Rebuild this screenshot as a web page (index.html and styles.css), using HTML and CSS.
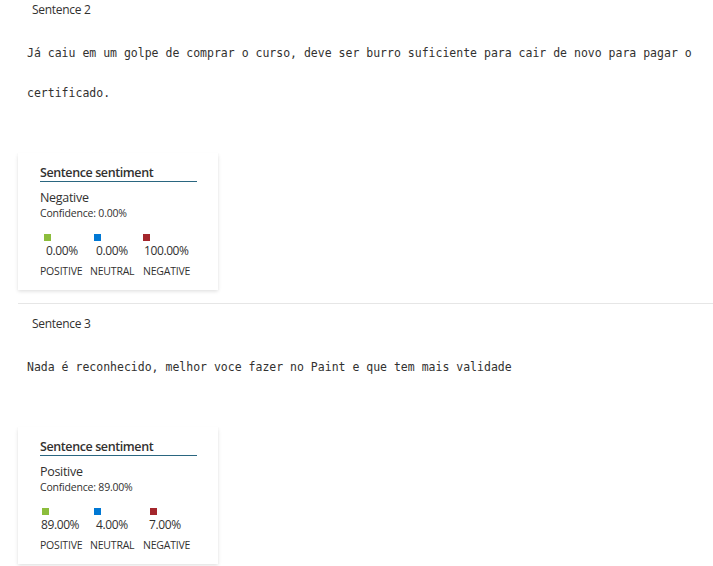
FILE: index.html
```html
<!DOCTYPE html>
<html lang="pt">
<head>
<meta charset="utf-8">
<link rel="stylesheet" href="styles.css">
</head>
<body>
<div class="list">
  <section class="sentence first">
    <div class="sentence-label">Sentence 2</div>
    <p class="sentence-text">Já caiu em um golpe de comprar o curso, deve ser burro suficiente para cair de novo para pagar o certificado.</p>
    <div class="card">
      <div class="card-title">Sentence sentiment</div>
      <div class="verdict">Negative</div>
      <div class="confidence">Confidence: 0.00%</div>
      <div class="scores">
        <div class="score col-pos"><span class="swatch pos"></span><span class="value v1">0.00%</span><span class="label">POSITIVE</span></div>
        <div class="score col-neu"><span class="swatch neu"></span><span class="value v2">0.00%</span><span class="label">NEUTRAL</span></div>
        <div class="score col-neg"><span class="swatch neg sw0"></span><span class="value v0">100.00%</span><span class="label">NEGATIVE</span></div>
      </div>
    </div>
  </section>
  <section class="sentence">
    <div class="sentence-label">Sentence 3</div>
    <p class="sentence-text">Nada é reconhecido, melhor voce fazer no Paint e que tem mais validade</p>
    <div class="card">
      <div class="card-title">Sentence sentiment</div>
      <div class="verdict">Positive</div>
      <div class="confidence">Confidence: 89.00%</div>
      <div class="scores">
        <div class="score col-pos"><span class="swatch pos sw1"></span><span class="value v0">89.00%</span><span class="label">POSITIVE</span></div>
        <div class="score col-neu"><span class="swatch neu"></span><span class="value v2">4.00%</span><span class="label">NEUTRAL</span></div>
        <div class="score col-neg"><span class="swatch neg sw2"></span><span class="value v2">7.00%</span><span class="label">NEGATIVE</span></div>
      </div>
    </div>
  </section>
</div>
</body>
</html>
```
FILE: styles.css
```css
html, body {
  margin: 0;
  padding: 0;
  background: #ffffff;
}
body {
  font-family: "Open Sans", "Noto Sans", sans-serif;
  color: #323130;
  overflow: hidden;
}
.list {
  padding-left: 18px;
}
.sentence {
  border-top: 1px solid #e6e6e6;
  padding-top: 11px;
  padding-bottom: 13px;
}
.sentence.first {
  margin-top: -11px;
  border-top-color: transparent;
}
.sentence-label {
  font-size: 12px;
  line-height: 18px;
  padding-left: 14px;
  letter-spacing: -0.3px;
}
.sentence-text {
  margin: 14px 0 0 0;
  padding-left: 9px;
  font-family: "DejaVu Sans Mono", "Liberation Mono", monospace;
  font-size: 11.5px;
  line-height: 40px;
  color: #323130;
}
.card {
  width: 200px;
  box-sizing: border-box;
  margin-top: 40px;
  padding: 12px 21px 12px 22px;
  background: #fff;
  box-shadow: 0 1.6px 3.6px rgba(0,0,0,0.13), 0 0.3px 0.9px rgba(0,0,0,0.11);
}
.card-title {
  font-size: 12.5px;
  font-weight: 600;
  line-height: 16px;
  letter-spacing: -0.4px;
  border-bottom: 1px solid #2a6680;
}
.verdict {
  font-size: 12.5px;
  line-height: 16px;
  margin-top: 8px;
  letter-spacing: -0.3px;
}
.confidence {
  font-size: 10.5px;
  line-height: 14px;
  letter-spacing: -0.2px;
}
.scores {
  display: flex;
  margin-top: 14px;
}
.score {
  display: flex;
  flex-direction: column;
  align-items: flex-start;
}
.col-pos { width: 50px; }
.col-neu { width: 53px; }
.col-neg { width: auto; }
.swatch {
  width: 7px;
  height: 7px;
  margin-left: 4px;
}
.swatch.sw0 { margin-left: 0; }
.swatch.sw1 { margin-left: 2px; }
.swatch.sw2 { margin-left: 7px; }
.swatch.pos { background: #8cbd3c; }
.swatch.neu { background: #0078d4; }
.swatch.neg { background: #a4262c; }
.value {
  font-size: 12px;
  line-height: 16px;
  margin-top: 2px;
  letter-spacing: -0.4px;
}
.v0 { padding-left: 1px; }
.v1 { padding-left: 6px; }
.v2 { padding-left: 6px; }
.label {
  font-size: 10.5px;
  line-height: 14px;
  margin-top: 5px;
  letter-spacing: -0.2px;
}
```
